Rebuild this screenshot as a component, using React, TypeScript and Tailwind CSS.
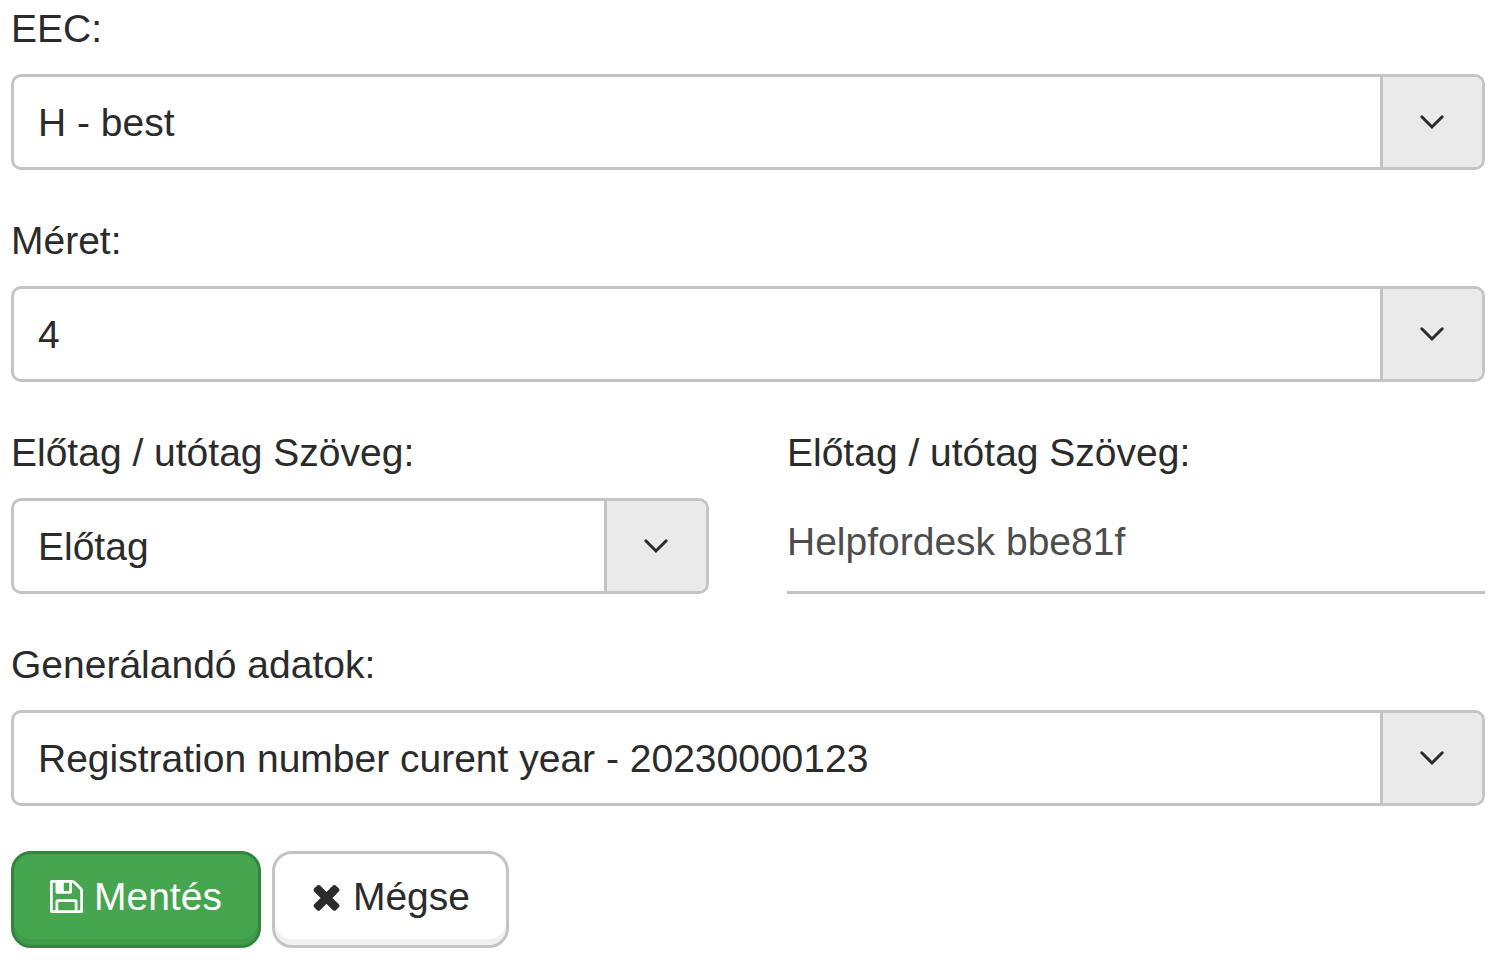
import { useId } from 'react'
import type { ReactNode } from 'react'

interface FieldProps {
  label: string
  value: string
}

function ChevronIcon() {
  return (
    <svg
      viewBox="0 0 24 14"
      className="h-[14px] w-6 overflow-visible"
      fill="none"
      stroke="#2b2b2b"
      strokeWidth="3"
      strokeLinecap="round"
      aria-hidden="true"
    >
      <path d="M1.8 1.8 12 12 22.2 1.8" />
    </svg>
  )
}

function SaveIcon() {
  return (
    <svg viewBox="128 128 1536 1536" className="mb-0.5 size-[33px]" fill="currentColor" aria-hidden="true">
      <path d="M512 1536h768v-384h-768v384zm896 0h128v-896q0-14-10-38.5t-20-34.5l-281-281q-10-10-34-20t-39-10v416q0 40-28 68t-68 28h-576q-40 0-68-28t-28-68v-416h-128v1280h128v-416q0-40 28-68t68-28h832q40 0 68 28t28 68v416zm-384-928v-320q0-13-9.5-22.5t-22.5-9.5h-192q-13 0-22.5 9.5t-9.5 22.5v320q0 13 9.5 22.5t22.5 9.5h192q13 0 22.5-9.5t9.5-22.5zm640 32v928q0 40-28 68t-68 28h-1344q-40 0-68-28t-28-68v-1344q0-40 28-68t68-28h928q40 0 88 20t76 48l280 280q28 28 48 76t20 88z" />
    </svg>
  )
}

function CloseIcon() {
  return (
    <svg viewBox="184 184 1424 1424" className="mb-0.5 size-[31px]" fill="currentColor" aria-hidden="true">
      <path d="M1490 1322q0 40-28 68l-136 136q-28 28-68 28t-68-28l-294-294-294 294q-28 28-68 28t-68-28l-136-136q-28-28-28-68t28-68l294-294-294-294q-28-28-28-68t28-68l136-136q28-28 68-28t68 28l294 294 294-294q28-28 68-28t68 28l136 136q28 28 28 68t-28 68l-294 294 294 294q28 28 28 68z" />
    </svg>
  )
}

function SelectField({ label, value }: FieldProps) {
  const id = useId()
  return (
    <div className="min-w-0 flex-1">
      <label htmlFor={id} className="block leading-12">
        {label}
      </label>
      <div className="relative mt-[21px]">
        <select
          id={id}
          defaultValue={value}
          className="block h-24 w-full appearance-none rounded-[10px] border-3 border-[#c4c4c4] bg-white pt-0.5 pr-28 pl-6"
        >
          <option>{value}</option>
        </select>
        <span className="pointer-events-none absolute inset-y-[3px] right-[3px] flex w-[102px] items-center justify-center rounded-r-[7px] border-l-3 border-[#c4c4c4] bg-[#eaeaea] pr-0.5">
          <ChevronIcon />
        </span>
      </div>
    </div>
  )
}

function TextField({ label, value }: FieldProps) {
  const id = useId()
  return (
    <div className="min-w-0 flex-1">
      <label htmlFor={id} className="block leading-12">
        {label}
      </label>
      <input
        id={id}
        type="text"
        defaultValue={value}
        className="mt-[21px] block h-24 w-full border-b-3 border-[#c4c4c4] pb-1.5 text-[#4d4d4d]"
      />
    </div>
  )
}

function Button({ className, children }: { className: string; children: ReactNode }) {
  return (
    <button
      type="button"
      className={`flex h-[97px] items-center gap-[11px] rounded-[20px] border-3 px-9 pb-[5px] leading-12 shadow-[inset_0_-6px_0_rgba(0,0,0,0.06)] ${className}`}
    >
      {children}
    </button>
  )
}

export default function App() {
  return (
    <form className="pt-[5px] pr-[25px] pl-[11px] font-['Liberation_Sans',Arial,sans-serif] text-[39px] text-[#2b2b2b]">
      <div className="flex flex-col gap-[47px]">
        <SelectField label="EEC:" value="H - best" />
        <SelectField label="Méret:" value="4" />
        <div className="flex gap-[78px]">
          <SelectField label="Előtag / utótag Szöveg:" value="Előtag" />
          <TextField label="Előtag / utótag Szöveg:" value="Helpfordesk bbe81f" />
        </div>
        <SelectField label="Generálandó adatok:" value="Registration number curent year - 20230000123" />
      </div>
      <div className="mt-[45px] flex gap-[11px]">
        <Button className="border-[#32853b] bg-[#46a54f] text-white">
          <SaveIcon />
          Mentés
        </Button>
        <Button className="border-[#c4c4c4] bg-white">
          <CloseIcon />
          Mégse
        </Button>
      </div>
    </form>
  )
}
